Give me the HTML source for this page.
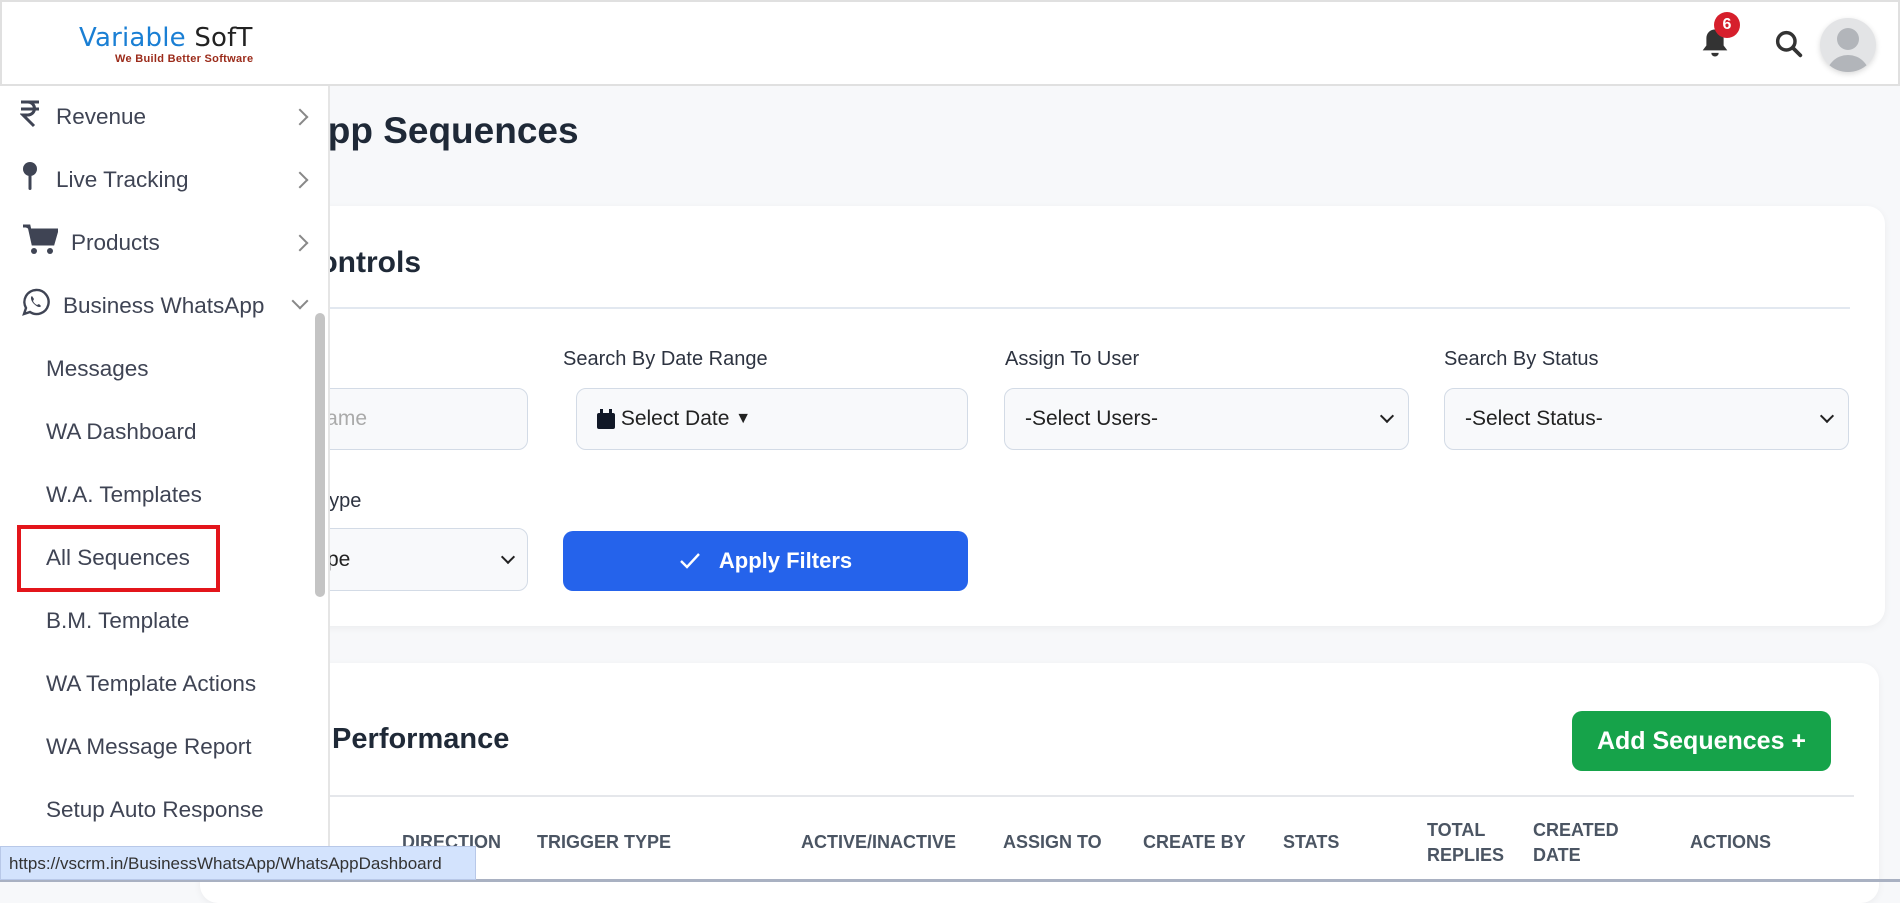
<!DOCTYPE html>
<html><head><meta charset="utf-8"><style>
*{box-sizing:border-box;margin:0;padding:0}
body{width:1900px;height:882px;overflow:hidden;background:#f7f8fa;font-family:"Liberation Sans",sans-serif;position:relative;color:#1f2937}
.abs{position:absolute}
.hdr{left:0;top:0;width:1900px;height:86px;background:#fff;border:2px solid #e0e0e0}
.side{left:0;top:86px;width:330px;height:796px;background:#fff;border-right:2px solid #e5e5e5;z-index:5}
.it{position:absolute;left:56px;font-size:22.5px;color:#3f4454}
.sub{position:absolute;left:46px;font-size:22.5px;color:#3f4454}
.chev{position:absolute;left:294px;width:12px;height:12px;border-right:2px solid #888;border-bottom:2px solid #888;transform:rotate(-45deg)}
.card{background:#fff;border-radius:18px;box-shadow:0 2px 8px rgba(0,0,0,.05)}
.lbl{font-size:20px;color:#2d3340}
.inp{background:#f8f9fb;border:1.5px solid #d3dbe6;border-radius:10px;font-size:21px;color:#222;display:flex;align-items:center;padding-left:20px}
.th{font-size:18px;font-weight:bold;color:#4b5563;line-height:25px}
</style></head><body>
<div class="abs hdr"></div>
<div class="abs" style="left:79px;top:23px;font-size:26px;letter-spacing:.2px;color:#1a7fd4;font-family:'DejaVu Sans',sans-serif">Variable <span style="color:#222">SofT</span></div>
<div class="abs" style="left:115px;top:53px;font-size:11px;font-weight:bold;color:#9b2b1a;letter-spacing:.3px">We Build Better Software</div>
<svg class="abs" style="left:1700px;top:27px" width="30" height="32" viewBox="0 0 24 26"><path d="M12 2c-4 0-7 3-7 7v6l-3 4h20l-3-4V9c0-4-3-7-7-7z" fill="#333"/><path d="M9 21a3 3 0 0 0 6 0z" fill="#333"/></svg>
<div class="abs" style="left:1714px;top:12px;width:26px;height:26px;border-radius:50%;background:#d61f2c;color:#fff;font-weight:bold;font-size:16px;text-align:center;line-height:26px">6</div>
<svg class="abs" style="left:1773px;top:28px" width="32" height="32" viewBox="0 0 24 24"><circle cx="10" cy="10" r="6.5" fill="none" stroke="#333" stroke-width="2.6"/><path d="M15 15l5.5 5.5" stroke="#333" stroke-width="2.8" stroke-linecap="round"/></svg>
<div class="abs" style="left:1820px;top:18px;width:56px;height:54px;border-radius:50%;background:#e3e4e6;overflow:hidden;box-shadow:0 2px 6px rgba(0,0,0,.15)">
<div style="position:absolute;left:17px;top:10px;width:22px;height:22px;border-radius:50%;background:#b2b5ba"></div>
<div style="position:absolute;left:6px;top:37px;width:44px;height:30px;border-radius:22px 22px 0 0;background:#b2b5ba"></div></div>
<div class="abs" style="left:190px;top:110px;font-size:37px;font-weight:bold;color:#1f2937">WhatsApp Sequences</div>
<div class="abs card" style="left:200px;top:206px;width:1685px;height:420px"></div>
<div class="abs" style="left:216px;top:246px;font-size:30px;font-weight:bold;color:#1f2937">Filter Controls</div>
<div class="abs" style="left:200px;top:307px;width:1650px;height:2px;background:#e2e8f0"></div>
<div class="abs lbl" style="left:563px;top:348px">Search By Date Range</div>
<div class="abs lbl" style="left:1005px;top:348px">Assign To User</div>
<div class="abs lbl" style="left:1444px;top:348px">Search By Status</div>
<div class="abs inp" style="left:200px;top:388px;width:328px;height:62px;color:#aaa;padding-left:110px">Name</div>
<div class="abs inp" style="left:576px;top:388px;width:392px;height:62px">
<svg width="18" height="20" viewBox="0 0 18 20"><rect x="0" y="4" width="18" height="16" rx="2" fill="#111827"/><rect x="3" y="0" width="3" height="5" fill="#111827"/><rect x="12" y="0" width="3" height="5" fill="#111827"/></svg>&nbsp;Select Date&nbsp;<span style="font-size:16px">▼</span></div>
<div class="abs inp" style="left:1004px;top:388px;width:405px;height:62px">-Select Users-<span style="position:absolute;right:16px;top:22px;width:10px;height:10px;border-right:2px solid #222;border-bottom:2px solid #222;transform:rotate(45deg)"></span></div>
<div class="abs inp" style="left:1444px;top:388px;width:405px;height:62px">-Select Status-<span style="position:absolute;right:16px;top:22px;width:10px;height:10px;border-right:2px solid #222;border-bottom:2px solid #222;transform:rotate(45deg)"></span></div>
<div class="abs lbl" style="left:318px;top:490px">Type</div>
<div class="abs inp" style="left:200px;top:528px;width:328px;height:63px;padding-left:40px">Select Type<span style="position:absolute;right:14px;top:23px;width:10px;height:10px;border-right:2px solid #222;border-bottom:2px solid #222;transform:rotate(45deg)"></span></div>
<div class="abs" style="left:563px;top:531px;width:405px;height:60px;background:#2563eb;border-radius:10px;color:#fff;font-weight:bold;font-size:22px;display:flex;align-items:center;justify-content:center">
<svg width="22" height="18" viewBox="0 0 22 18" style="margin-right:18px"><path d="M2 9l6 6L20 2" fill="none" stroke="#fff" stroke-width="2.4"/></svg>Apply Filters</div>
<div class="abs card" style="left:200px;top:663px;width:1679px;height:240px"></div>
<div class="abs" style="left:187px;top:723px;font-size:29px;font-weight:bold;color:#1f2937">Sequence Performance</div>
<div class="abs" style="left:1572px;top:711px;width:259px;height:60px;background:#16a34a;border-radius:10px;color:#fff;font-weight:bold;font-size:25px;display:flex;align-items:center;justify-content:center">Add Sequences +</div>
<div class="abs" style="left:200px;top:795px;width:1654px;height:2px;background:#e5e7eb"></div>
<div class="abs th" style="left:402px;top:830px">DIRECTION</div>
<div class="abs th" style="left:537px;top:830px">TRIGGER TYPE</div>
<div class="abs th" style="left:801px;top:830px">ACTIVE/INACTIVE</div>
<div class="abs th" style="left:1003px;top:830px">ASSIGN TO</div>
<div class="abs th" style="left:1143px;top:830px">CREATE BY</div>
<div class="abs th" style="left:1283px;top:830px">STATS</div>
<div class="abs th" style="left:1427px;top:818px">TOTAL<br>REPLIES</div>
<div class="abs th" style="left:1533px;top:818px">CREATED<br>DATE</div>
<div class="abs th" style="left:1690px;top:830px">ACTIONS</div>
<div class="abs side">
<svg class="abs" style="left:20px;top:14px" width="20" height="28" viewBox="0 0 20 28"><path d="M1 2h18M1 9h18M3 2h5a6 6 0 0 1 0 13H3l11 11" fill="none" stroke="#3f4454" stroke-width="3"/></svg>
<div class="it" style="top:18px">Revenue</div><div class="chev" style="top:25px"></div>
<svg class="abs" style="left:22px;top:76px" width="16" height="30" viewBox="0 0 16 30"><circle cx="8" cy="7" r="7" fill="#3f4454"/><rect x="6.5" y="12" width="3" height="16" rx="1.5" fill="#3f4454"/></svg>
<div class="it" style="top:81px">Live Tracking</div><div class="chev" style="top:88px"></div>
<svg class="abs" style="left:22px;top:138px" width="36" height="32" viewBox="0 0 36 32"><path d="M1 2h6l4 18h20l4-14H9" fill="#3f4454" stroke="#3f4454" stroke-width="3"/><circle cx="12" cy="27" r="3" fill="#3f4454"/><circle cx="28" cy="27" r="3" fill="#3f4454"/></svg>
<div class="it" style="top:144px;left:71px">Products</div><div class="chev" style="top:151px"></div>
<svg class="abs" style="left:22px;top:202px" width="28" height="28" viewBox="0 0 28 28"><path d="M14 2a12 12 0 0 0-10 18l-2 6 6-2A12 12 0 1 0 14 2z" fill="none" stroke="#3f4454" stroke-width="2.4"/><path d="M10 8c-2 1-1 5 2 8s6 4 7 2l-2-2-2 1c-2-1-3-2-4-4l1-2z" fill="#3f4454"/></svg>
<div class="it" style="top:207px;left:63px">Business WhatsApp</div><div class="chev" style="top:209px;left:294px;transform:rotate(45deg)"></div>
<div class="sub" style="top:270px">Messages</div>
<div class="sub" style="top:333px">WA Dashboard</div>
<div class="sub" style="top:396px">W.A. Templates</div>
<div class="sub" style="top:459px">All Sequences</div>
<div class="abs" style="left:17px;top:439px;width:203px;height:67px;border:4px solid #e3151b"></div>
<div class="sub" style="top:522px">B.M. Template</div>
<div class="sub" style="top:585px">WA Template Actions</div>
<div class="sub" style="top:648px">WA Message Report</div>
<div class="sub" style="top:711px">Setup Auto Response</div>
<div class="abs" style="left:315px;top:227px;width:10px;height:284px;border-radius:5px;background:#c4c4c4"></div>
</div>
<div class="abs" style="left:0;top:846px;width:476px;height:34px;background:#d3e3fd;border:1px solid #b8c8e8;font-size:17px;color:#333;padding:7px 0 0 8px;z-index:9">https://vscrm.in/BusinessWhatsApp/WhatsAppDashboard</div>
<div class="abs" style="left:0;top:879px;width:1900px;height:3px;background:#a9b1c2;z-index:8"></div>
</body></html>
